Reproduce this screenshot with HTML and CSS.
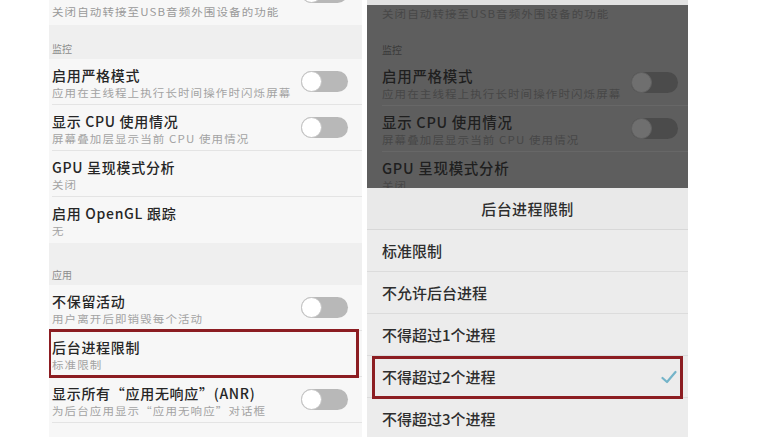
FILE: index.html
```html
<!DOCTYPE html>
<html lang="zh">
<head>
<meta charset="utf-8">
<link rel="stylesheet" href="styles.css">
</head>
<body>
<div class="page">
  <div class="panel light">
    <div class="cut">
      <div class="sub">关闭自动转接至USB音频外围设备的功能</div>
      <span class="toggle top-toggle"><span class="knob"></span></span>
    </div>
    <div class="section s1">监控</div>
    <div class="row"><div class="inner">
      <div class="txt"><div class="title">启用严格模式</div><div class="sub">应用在主线程上执行长时间操作时闪烁屏幕</div></div>
      <span class="toggle"><span class="knob"></span></span>
    </div></div>
    <div class="row"><div class="inner">
      <div class="txt"><div class="title">显示 CPU 使用情况</div><div class="sub">屏幕叠加层显示当前 CPU 使用情况</div></div>
      <span class="toggle"><span class="knob"></span></span>
    </div></div>
    <div class="row"><div class="inner">
      <div class="txt"><div class="title">GPU 呈现模式分析</div><div class="sub">关闭</div></div>
    </div></div>
    <div class="row last"><div class="inner">
      <div class="txt"><div class="title">启用 OpenGL 跟踪</div><div class="sub">无</div></div>
    </div></div>
    <div class="section s2">应用</div>
    <div class="row"><div class="inner">
      <div class="txt"><div class="title">不保留活动</div><div class="sub">用户离开后即销毁每个活动</div></div>
      <span class="toggle"><span class="knob"></span></span>
    </div></div>
    <div class="row marked"><div class="inner">
      <div class="txt"><div class="title">后台进程限制</div><div class="sub">标准限制</div></div>
    </div></div>
    <div class="row"><div class="inner">
      <div class="txt"><div class="title">显示所有“应用无响应”(ANR)</div><div class="sub">为后台应用显示“应用无响应”对话框</div></div>
      <span class="toggle"><span class="knob"></span></span>
    </div></div>
  </div>

  <div class="panel dark">
    <div class="strip"></div>
    <div class="dim">
      <div class="cut">
        <div class="sub">关闭自动转接至USB音频外围设备的功能</div>
      </div>
      <div class="section s1">监控</div>
      <div class="row"><div class="inner">
        <div class="txt"><div class="title">启用严格模式</div><div class="sub">应用在主线程上执行长时间操作时闪烁屏幕</div></div>
        <span class="toggle"><span class="knob"></span></span>
      </div></div>
      <div class="row"><div class="inner">
        <div class="txt"><div class="title">显示 CPU 使用情况</div><div class="sub">屏幕叠加层显示当前 CPU 使用情况</div></div>
        <span class="toggle"><span class="knob"></span></span>
      </div></div>
      <div class="row"><div class="inner">
        <div class="txt"><div class="title">GPU 呈现模式分析</div><div class="sub">关闭</div></div>
      </div></div>
    </div>
    <div class="dialog">
      <div class="dlg-title">后台进程限制</div>
      <div class="opt">标准限制</div>
      <div class="opt">不允许后台进程</div>
      <div class="opt">不得超过1个进程</div>
      <div class="opt marked-opt">不得超过2个进程
        <svg class="check" width="16" height="14" viewBox="0 0 16 14"><polyline points="1.5,8 6,12 14.5,2" fill="none" stroke="#74b4c9" stroke-width="2.2" stroke-linecap="round" stroke-linejoin="round"/></svg>
      </div>
      <div class="opt">不得超过3个进程</div>
    </div>
  </div>
</div>
</body>
</html>
```

FILE: styles.css
```css
* { box-sizing: border-box; }
html, body { margin: 0; padding: 0; background: #ffffff; }
body {
  font-family: "Noto Sans CJK SC", "Noto Sans", "Liberation Sans", sans-serif;
  width: 763px;
  height: 437px;
  overflow: hidden;
}
.page {
  display: flex;
  gap: 5px;
  padding-left: 49px;
  height: 437px;
}
.panel {
  display: flex;
  flex-direction: column;
  overflow: hidden;
  height: 437px;
}
.light {
  width: 313px;
  background: #f7f7f7;
}
.dark {
  width: 321px;
  background: #ececec;
}

/* shared list pieces */
.cut {
  height: 25px;
  display: flex;
  justify-content: space-between;
  align-items: flex-start;
  padding: 3px 14px 0 3px;
}
.top-toggle { margin-top: -21px; }
.section {
  display: flex;
  align-items: flex-end;
  background: #efefef;
  font-size: 10px;
  line-height: 12px;
  color: #8c8c8c;
  padding: 0 0 4px 3px;
}
.s1 { height: 34px; }
.s2 { height: 42px; }
.row {
  height: 46px;
  position: relative;
  padding-left: 3px;
}
.row .inner {
  height: 100%;
  display: flex;
  align-items: center;
  justify-content: space-between;
  border-bottom: 1px solid #e4e4e4;
  padding-right: 14px;
}
.row.last .inner { border-bottom: none; }
.txt { display: flex; flex-direction: column; padding-top: 2px; }
.title {
  font-size: 14px;
  line-height: 18px;
  letter-spacing: 0.7px;
  font-weight: 500;
  color: #262626;
  white-space: nowrap;
}
.sub {
  font-size: 11.5px;
  line-height: 16px;
  letter-spacing: 1.1px;
  color: #a3a3a3;
  white-space: nowrap;
  transform: scaleY(0.92);
  transform-origin: left center;
}
.cut .sub { color: #9a9a9a; }

.toggle {
  width: 47px;
  height: 21px;
  border-radius: 11px;
  background: #b8b8b8;
  position: relative;
  flex: none;
}
.knob {
  position: absolute;
  left: 0;
  top: 0;
  width: 21px;
  height: 21px;
  border-radius: 50%;
  background: #ffffff;
  border: 1px solid #c4c4c4;
}

.marked::after {
  content: "";
  position: absolute;
  left: -1px;
  right: 3px;
  top: -2px;
  bottom: -1px;
  border: 3px solid #8c1d22;
}

/* right panel */
.strip { height: 5px; background: #e2e2e2; flex: none; }
.dim {
  height: 183px;
  overflow: hidden;
  background: #5e5e5e;
  flex: none;
}
.dim .cut { height: 21px; padding: 0 14px 0 15px; }
.dim .section { background: #5e5e5e; color: #3a3a3a; padding-left: 15px; }
.dim .row { padding-left: 15px; }
.dim .row .inner { border-bottom-color: #676767; padding-right: 10px; }
.dim .title { color: #1f1f1f; font-size: 14.5px; }
.dim .sub { color: #474747; }
.dim .toggle { background: #4b4b4b; }
.dim .knob { background: #6f6f6f; border-color: #616161; }

.dialog { display: flex; flex-direction: column; }
.dlg-title {
  height: 42px;
  display: flex;
  align-items: center;
  justify-content: center;
  font-size: 15px;
  font-weight: 500;
  letter-spacing: 0.4px;
  color: #2e2e2e;
  background: #e9e9e9;
  border-bottom: 1px solid #d8d8d8;
}
.opt {
  height: 42px;
  display: flex;
  align-items: center;
  justify-content: space-between;
  padding: 0 11px 0 15px;
  font-size: 15px;
  font-weight: 500;
  color: #2e2e2e;
  border-bottom: 1px solid #dcdcdc;
  position: relative;
}
.marked-opt::after {
  content: "";
  position: absolute;
  left: 5px;
  right: 5px;
  top: 0;
  bottom: -2px;
  border: 3px solid #8c1d22;
}
.check { flex: none; }
```
